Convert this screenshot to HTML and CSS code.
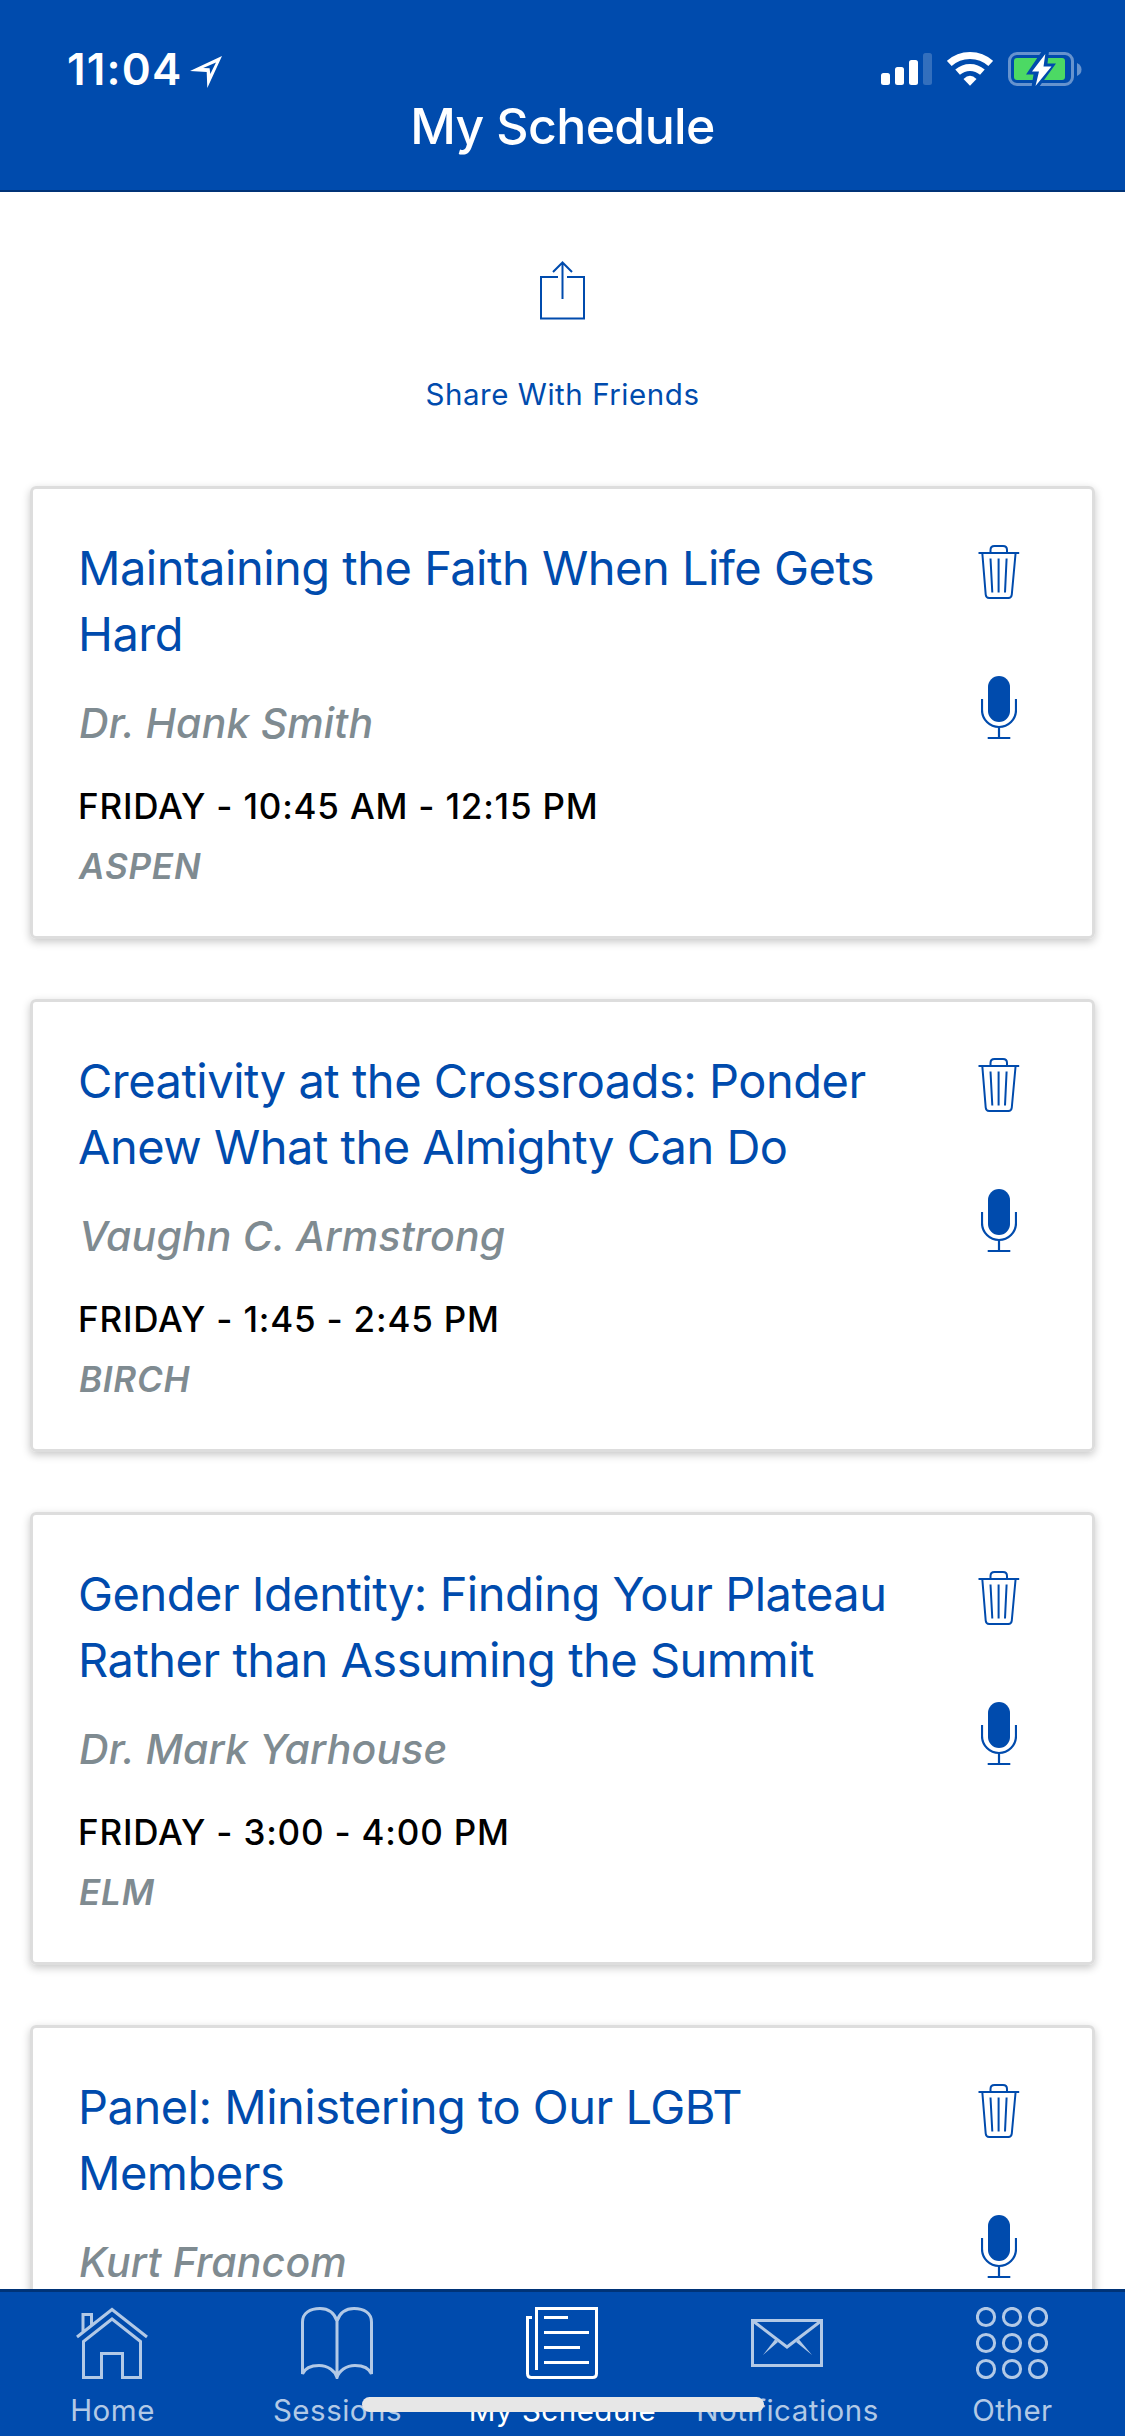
FILE: index.html
```
<!DOCTYPE html>
<html lang="en">
<head>
<meta charset="utf-8">
<title>My Schedule</title>
<link rel="stylesheet" href="styles.css">
</head>
<body>
<svg class="sprite" aria-hidden="true">
  <symbol id="trash" viewBox="0 0 42 54">
    <g fill="none" stroke="currentColor" stroke-width="2">
      <path d="M0.500 8H41.200"/>
      <path d="M12.500 8V5Q12.500 1 16.500 1H25Q29 1 29 5V8"/>
      <path d="M4.300 8L7.700 49.500Q8 53 11.200 53H30.300Q33.500 53 33.800 49.500L37.600 8"/>
      <path d="M12.500 13.500L14.300 47.500M20.600 13.500V47.500M28.600 13.500L27 47.500"/>
    </g>
  </symbol>
  <symbol id="mic" viewBox="0 0 36 64">
    <rect x="7" y="0" width="22" height="46" rx="11" fill="currentColor"/>
    <path d="M1 23V34A17 17 0 0 0 35 34V23M18 51V62M6.700 62H29.300" fill="none" stroke="currentColor" stroke-width="2.200"/>
  </symbol>
</svg>
<div class="screen">
  <header class="header">
    <div class="status">
      <div class="clock">
        <span class="clock-time">11:04</span>
        <svg class="location" viewBox="0 0 32 32"><path fill="#fff" fill-rule="evenodd" d="M32 0L17.300 32L16.700 16L0 15ZM26 6.500L13.200 12L19.600 12.300L20.300 18Z"/></svg>
      </div>
      <div class="indicators">
        <svg width="51" height="32" viewBox="0 0 51 32" fill="#fff"><rect y="20" width="9" height="12" rx="2.500"/><rect x="14" y="14" width="9" height="18" rx="2.500"/><rect x="28" y="7" width="9" height="25" rx="2.500"/><rect x="42" width="9" height="32" rx="2.500" opacity=".2"/></svg>
        <svg class="wifi" width="46" height="34" viewBox="0 0 46 34"><g fill="none" stroke="#fff" stroke-width="7"><path d="M2.300 11.500Q11 3.500 23 3.500T43.700 11.500"/><path d="M10.600 20.200Q16 15.400 23 15.400T35.400 20.200"/></g><path fill="#fff" d="M16.500 27Q23 20.500 29.500 27L23 33.700Z"/></svg>
        <svg class="battery" width="74" height="36" viewBox="0 0 74 36"><rect x="1.500" y="2.500" width="63" height="31" rx="7.500" fill="none" stroke="#fff" stroke-opacity=".4" stroke-width="3"/><path d="M69 12Q73.500 14 73.500 18.500T69 25Z" fill="#fff" fill-opacity=".4"/><rect x="6" y="7" width="51" height="22" rx="3" fill="#4cd964"/><path d="M34 0L18 23.500H25.500L23.500 36H31L48 12.500H39.500L41 0Z" fill="#004bad"/><path d="M37.300 3L24 20.500H31L27.500 35L43.500 15.500H35.500Z" fill="#fff"/></svg>
      </div>
    </div>
    <h1 class="title">My Schedule</h1>
  </header>

  <main class="content">
    <div class="share">
      <svg width="46" height="60" viewBox="0 0 46 60" fill="none" stroke="currentColor" stroke-width="2"><path d="M18 17H1V58.500H44V17H27M22.500 39V2M13 12L22.500 2.500L32 12"/></svg>
      <span class="share-label">Share With Friends</span>
    </div>

    <article class="card">
      <div class="info">
        <h2 class="session">Maintaining the Faith When Life Gets Hard</h2>
        <p class="speaker">Dr. Hank Smith</p>
        <p class="time">FRIDAY - 10:45 AM - 12:15 PM</p>
        <p class="room">ASPEN</p>
      </div>
      <div class="actions"><svg class="trash"><use href="#trash"/></svg><svg class="mic"><use href="#mic"/></svg></div>
    </article>

    <article class="card">
      <div class="info">
        <h2 class="session">Creativity at the Crossroads: Ponder Anew What the Almighty Can Do</h2>
        <p class="speaker">Vaughn C. Armstrong</p>
        <p class="time">FRIDAY - 1:45 - 2:45 PM</p>
        <p class="room">BIRCH</p>
      </div>
      <div class="actions"><svg class="trash"><use href="#trash"/></svg><svg class="mic"><use href="#mic"/></svg></div>
    </article>

    <article class="card">
      <div class="info">
        <h2 class="session">Gender Identity: Finding Your Plateau Rather than Assuming the Summit</h2>
        <p class="speaker">Dr. Mark Yarhouse</p>
        <p class="time">FRIDAY - 3:00 - 4:00 PM</p>
        <p class="room">ELM</p>
      </div>
      <div class="actions"><svg class="trash"><use href="#trash"/></svg><svg class="mic"><use href="#mic"/></svg></div>
    </article>

    <article class="card">
      <div class="info">
        <h2 class="session">Panel: Ministering to Our LGBT Members</h2>
        <p class="speaker">Kurt Francom</p>
      </div>
      <div class="actions"><svg class="trash"><use href="#trash"/></svg><svg class="mic"><use href="#mic"/></svg></div>
    </article>
  </main>

  <nav class="tabs">
    <div class="tab">
      <svg class="tab-icon" viewBox="0 0 72 72"><path d="M1 30L36 2.500L71 30M7 25V7.500H15.500V18M36 12L7.500 34.500V70.500H25.500V46.500H46.500V70.500H64.500V34.500Z"/></svg>
      <span>Home</span>
    </div>
    <div class="tab">
      <svg class="tab-icon" viewBox="0 0 72 72"><path d="M36 70V14C33 5 26 1.500 19 1.500C9 1.500 1.500 6 1.500 15V67C4 61 11 58.500 18 58.500C27 58.500 34 64 36 70.500C38 64 45 58.500 54 58.500C61 58.500 68 61 70.500 67V15C70.500 6 63 1.500 53 1.500C46 1.500 39 5 36 14"/></svg>
      <span>Sessions</span>
    </div>
    <div class="tab active">
      <svg class="tab-icon" viewBox="0 0 72 72"><path d="M10.500 63V1.500H70.500V66.500Q70.500 70.500 66.500 70.500H5.500Q1.500 70.500 1.500 66.500V10.500H6M18 10.500H42M18 25.500H63M18 40.500H54M18 55.500H63"/></svg>
      <span>My Schedule</span>
    </div>
    <div class="tab">
      <svg class="tab-icon" viewBox="0 0 72 72"><path d="M1.500 13.500H70.500V58.500H1.500ZM2 14L36 40L70 14"/><path class="solid" d="M24 32.500L12 48L27 35ZM48 32.500L61 48L45 35Z"/></svg>
      <span>Notifications</span>
    </div>
    <div class="tab">
      <svg class="tab-icon" viewBox="0 0 72 72"><circle cx="10" cy="10" r="8.600"/><circle cx="36" cy="10" r="8.600"/><circle cx="62" cy="10" r="8.600"/><circle cx="10" cy="36" r="8.600"/><circle cx="36" cy="36" r="8.600"/><circle cx="62" cy="36" r="8.600"/><circle cx="10" cy="62" r="8.600"/><circle cx="36" cy="62" r="8.600"/><circle cx="62" cy="62" r="8.600"/></svg>
      <span>Other</span>
    </div>
    <div class="home-indicator"></div>
  </nav>
</div>
</body>
</html>
```
FILE: styles.css
```
* { box-sizing: border-box; }
body { margin: 0; background: #fff; font-family: Inter, "Liberation Sans", sans-serif; font-feature-settings: "calt" 0; }
h1, h2, p { margin: 0; }
svg { display: block; flex: none; }
.sprite { display: none; }

.screen { display: flex; flex-direction: column; width: 1125px; height: 2436px; overflow: hidden; }

.header { flex: none; height: 192px; padding-top: 44px; background: #004bad; border-bottom: 2px solid #003377; color: #fff; }
.status { display: flex; justify-content: space-between; height: 50px; padding: 0 43px 0 67px; }
.clock { display: flex; gap: 10px; }
.clock-time { width: 113px; font-size: 44px; line-height: 50px; font-weight: 600; letter-spacing: 1.2px; white-space: nowrap; }
.location { width: 32px; height: 32px; margin-top: 12px; }
.indicators { display: flex; align-items: flex-start; gap: 15px; padding-top: 9px; }
.wifi { margin-top: -1px; }
.battery { margin-top: -2px; }
.title { font-size: 50px; line-height: 60px; font-weight: 500; letter-spacing: -.65px; text-align: center; margin-top: 2px; }

.content { flex: 1; min-height: 0; overflow: hidden; padding: 68px 30px 0; color: #004bad; }
.share { display: flex; flex-direction: column; align-items: center; height: 226px; }
.share-label { margin-top: 54px; font-size: 29.5px; line-height: 40px; letter-spacing: .55px; }

.card { display: flex; justify-content: space-between; height: 453px; margin-bottom: 60px; padding: 46px 72px 0 45px; border: 3px solid #ddd; border-radius: 6px; box-shadow: 0 3px 9px rgba(0, 0, 0, .22); }
.info { width: 830px; }
.session { font-size: 47px; line-height: 66px; font-weight: 400; letter-spacing: -.5px; }
.speaker { margin-top: 29px; padding-left: 1px; font-size: 41px; line-height: 54px; font-weight: 500; font-style: italic; letter-spacing: .15px; color: #7f8b91; }
.time { margin-top: 32px; font-size: 35px; line-height: 48px; font-weight: 500; letter-spacing: .8px; color: #000; }
.room { margin-top: 12px; padding-left: 1px; font-size: 35px; line-height: 48px; font-weight: 600; font-style: italic; letter-spacing: .8px; color: #7f8b91; }
.actions { display: flex; flex-direction: column; align-items: center; padding-top: 10px; gap: 77px; }
.trash { width: 42px; height: 54px; }
.mic { width: 36px; height: 64px; }

.tabs { position: relative; flex: none; display: grid; grid-template-columns: repeat(5, 1fr); height: 147px; padding-top: 15px; background: #004bad; border-top: 3px solid #003377; }
.tab { display: flex; flex-direction: column; align-items: center; gap: 11px; color: #b2c9e6; font-size: 29.5px; line-height: 40px; letter-spacing: .5px; white-space: nowrap; }
.tab.active { color: #fff; }
.tab-icon { width: 72px; height: 72px; margin-right: 1px; fill: none; stroke: currentColor; stroke-width: 3px; }
.tab-icon .solid { fill: currentColor; stroke: none; }
.home-indicator { position: absolute; left: 362px; top: 105px; width: 402px; height: 15px; border-radius: 8px; background: #e7e7e7; }
```
